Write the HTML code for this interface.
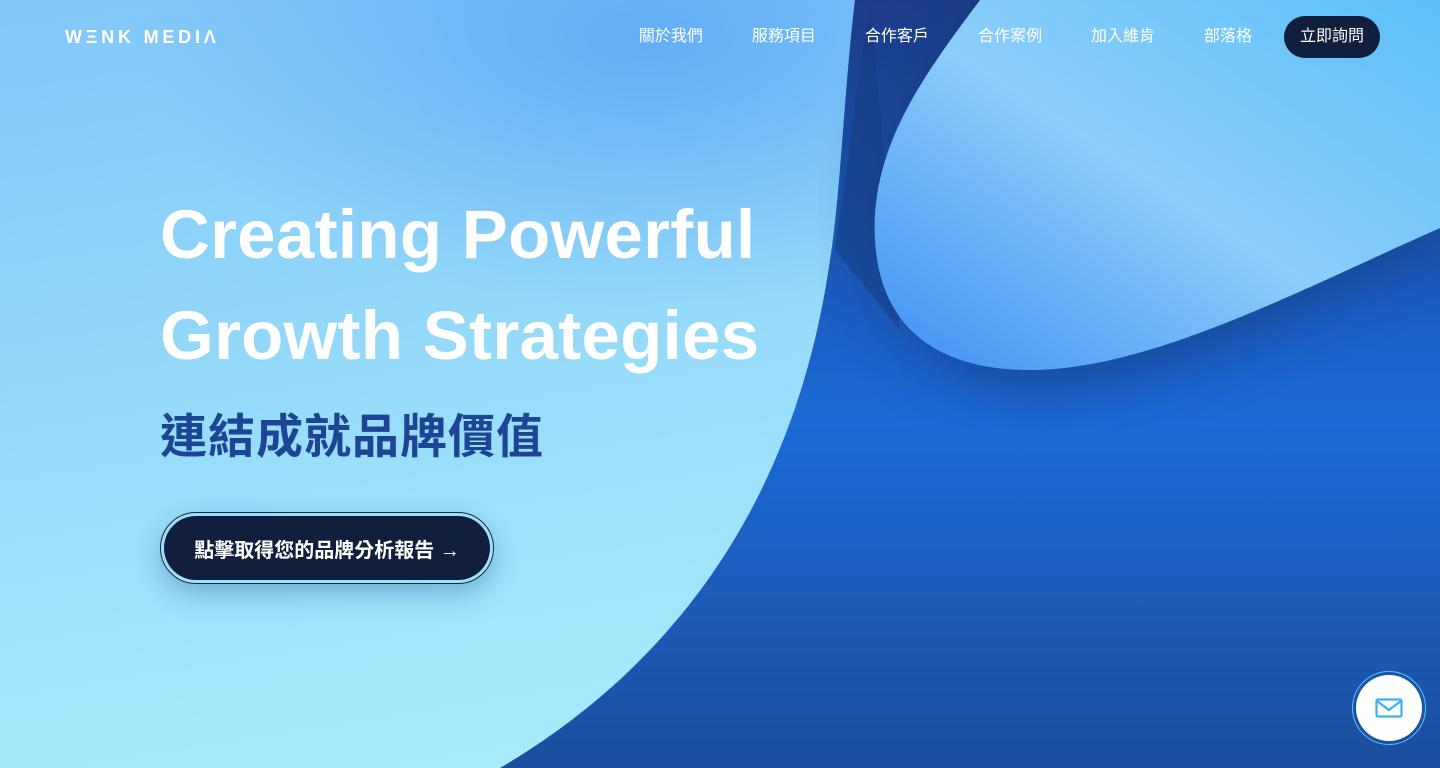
<!DOCTYPE html>
<html><head><meta charset="utf-8"><style>
*{margin:0;padding:0;box-sizing:border-box}
body{width:1440px;height:768px;overflow:hidden;position:relative;font-family:"Liberation Sans","Noto Sans CJK TC",sans-serif}
svg.bg{position:absolute;left:0;top:0}
.logo{position:absolute;left:65px;top:27px;color:#fff;font-size:18px;font-weight:bold;letter-spacing:3.8px}
.nav{position:absolute;top:16px;right:60px;display:flex;align-items:center}
.nav a{color:#fff;font-size:16px;margin-right:49px;text-decoration:none;position:relative;top:-3px}
.nav .cta{background:#0f1f3d;border-radius:21px;padding:10px 16px;margin:0;margin-left:-17px;top:0;line-height:22px}
h1{position:absolute;left:160px;top:184px;color:#fff;font-size:69px;line-height:101px;font-weight:bold;letter-spacing:0.3px}
h2{position:absolute;left:160px;top:398px;color:#1e4595;font-size:47px;font-weight:bold;letter-spacing:1px}
.btn{position:absolute;left:160px;top:512px;width:334px;height:72px;border-radius:36px;border:1.5px solid #1a2a4a;padding:3px;box-shadow:0 10px 25px rgba(20,60,120,.3)}
.btn div{background:#10203c;border-radius:32px;height:100%;color:#fff;font-size:20px;font-weight:bold;display:flex;align-items:center;justify-content:center}
.mail{position:absolute;left:1352px;top:671px;width:74px;height:74px;border-radius:50%;border:1.5px solid #4cc8f5;padding:3px}
.mail div{background:#fff;border-radius:50%;width:100%;height:100%;display:flex;align-items:center;justify-content:center}
</style></head><body>
<svg class="bg" width="1440" height="768" viewBox="0 0 1440 768">
<defs>
<linearGradient id="base" x1="0" y1="0" x2="0.3" y2="1"><stop offset="0" stop-color="#80c6f9"/><stop offset="0.5" stop-color="#95daf9"/><stop offset="1" stop-color="#a8ebfc"/></linearGradient>
<radialGradient id="glow" cx="0.45" cy="0.05" r="0.35"><stop offset="0" stop-color="#5aa6f6" stop-opacity=".8"/><stop offset="1" stop-color="#5aa6f6" stop-opacity="0"/></radialGradient>
<linearGradient id="dark" x1="0" y1="0" x2="0" y2="1"><stop offset="0" stop-color="#1c3c88"/><stop offset="0.55" stop-color="#1b6ad6"/><stop offset="1" stop-color="#1c4d9e"/></linearGradient>
<linearGradient id="blob" x1="0" y1="1" x2="1" y2="0"><stop offset="0" stop-color="#3e8ef5"/><stop offset="0.5" stop-color="#8ccdfa"/><stop offset="1" stop-color="#5cc0f8"/></linearGradient>
<filter id="sh"><feGaussianBlur stdDeviation="30"/></filter>
</defs>
<rect width="1440" height="768" fill="url(#base)"/>
<rect width="1440" height="768" fill="url(#glow)"/>
<path d="M855,0 C845,80 840,200 830,260 C800,470 700,650 500,768 L1440,768 L1440,0 Z" fill="url(#dark)"/>
<path d="M980,0 C920,80 870,150 875,240 C880,340 960,400 1060,390 C1180,380 1300,300 1440,240 L1440,0 Z" fill="#123070" opacity=".5" filter="url(#sh)"/>
<path d="M835,250 L900,330 L870,0 Z" fill="#163a80" opacity=".5"/>
<path d="M980,0 C920,80 870,150 875,240 C880,330 940,370 1030,370 C1150,370 1300,290 1440,228 L1440,0 Z" fill="url(#blob)"/>
</svg>
<div class="logo">WΞNK MEDIΛ</div>
<div class="nav"><a>關於我們</a><a>服務項目</a><a>合作客戶</a><a>合作案例</a><a>加入維肯</a><a>部落格</a><a class="cta">立即詢問</a></div>
<h1>Creating Powerful<br>Growth Strategies</h1>
<h2>連結成就品牌價值</h2>
<div class="btn"><div>點擊取得您的品牌分析報告 →</div></div>
<div class="mail"><div><svg width="28" height="20" viewBox="0 0 28 20"><rect x="1.5" y="1.5" width="25" height="17" rx="1.5" fill="none" stroke="#3bb0f5" stroke-width="2.2"/><path d="M2,3 L14,12 L26,3" fill="none" stroke="#3bb0f5" stroke-width="2.2"/></svg></div></div>
</body></html>
